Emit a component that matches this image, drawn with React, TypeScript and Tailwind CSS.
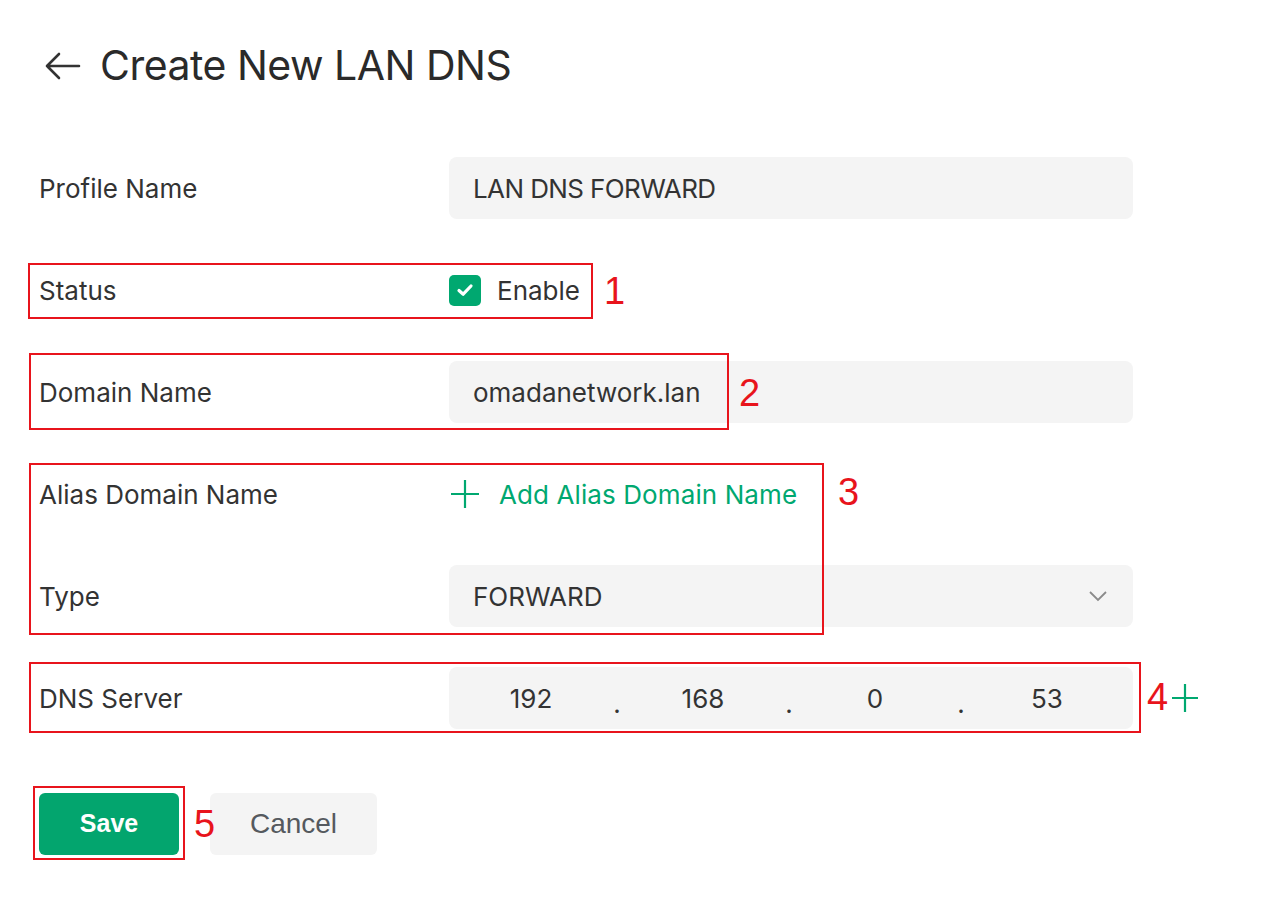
import React from "react";

const GREEN = "#00a870";

function Label({ children }: { children: React.ReactNode }) {
  return <div className="w-[410px] shrink-0 text-[26px] text-[#333333]">{children}</div>;
}

function Field({ children, className = "" }: { children: React.ReactNode; className?: string }) {
  return (
    <div className={`flex h-[62px] w-[684px] items-center rounded-[8px] bg-[#f4f4f4] px-6 text-[26px] text-[#333333] ${className}`}>
      {children}
    </div>
  );
}

function Row({ children }: { children: React.ReactNode }) {
  return <div className="flex h-[62px] items-center">{children}</div>;
}

function Mark({ className, n, numClass }: { className: string; n: string; numClass: string }) {
  return (
    <>
      <div className={`pointer-events-none absolute border-2 border-[#e8141c] ${className}`} />
      <div
        className={`pointer-events-none absolute text-[38px] leading-none text-[#e8141c] ${numClass}`}
        style={{ fontFamily: '"Liberation Sans", Arial, sans-serif' }}
      >
        {n}
      </div>
    </>
  );
}

export default function App() {
  return (
    <div
      className="relative h-[900px] w-[1278px] bg-white"
      style={{ fontFamily: 'Inter, "Noto Sans", sans-serif' }}
    >
      <div className="pl-[39px] pt-[40px]">
        {/* header */}
        <div className="flex h-[52px] items-center">
          <svg width="40" height="32" viewBox="0 0 40 32" className="ml-[4px] mr-[17px]">
            <path d="M4 16 H36 M16 4 L4 16 L16 28" fill="none" stroke="#333" strokeWidth="2.6" strokeLinecap="round" strokeLinejoin="round" />
          </svg>
          <h1 className="text-[41px] font-normal tracking-[-0.5px] text-[#2a2a2a]">Create New LAN DNS</h1>
        </div>

        <div className="mt-[65px] flex flex-col gap-[40px]">
          <Row>
            <Label>Profile Name</Label>
            <Field>
              <span className="tracking-[-0.6px]">LAN DNS FORWARD</span>
            </Field>
          </Row>

          <Row>
            <Label>Status</Label>
            <div className="flex items-center gap-[16px]">
              <div className="flex h-[31px] w-[32px] items-center justify-center rounded-[5px]" style={{ backgroundColor: GREEN }}>
                <svg width="20" height="20" viewBox="0 0 20 20">
                  <path d="M4 10.5 L8.2 14.2 L16 6" fill="none" stroke="white" strokeWidth="3.2" strokeLinecap="round" strokeLinejoin="round" />
                </svg>
              </div>
              <span className="text-[26px] text-[#333333]">Enable</span>
            </div>
          </Row>

          <Row>
            <Label>Domain Name</Label>
            <Field>omadanetwork.lan</Field>
          </Row>

          <Row>
            <Label>Alias Domain Name</Label>
            <div className="flex items-center gap-[18px] text-[26px]" style={{ color: GREEN }}>
              <svg width="32" height="32" viewBox="0 0 32 32">
                <path d="M16 2 V30 M2 16 H30" stroke={GREEN} strokeWidth="2.2" />
              </svg>
              <span className="tracking-[0.1px]">Add Alias Domain Name</span>
            </div>
          </Row>

          <Row>
            <Label>Type</Label>
            <Field className="justify-between">
              <span>FORWARD</span>
              <svg width="24" height="24" viewBox="0 0 24 24" className="mr-[-1px]">
                <path d="M4 8 L12 16 L20 8" fill="none" stroke="#8a8a8a" strokeWidth="1.8" />
              </svg>
            </Field>
          </Row>

          <Row>
            <Label>DNS Server</Label>
            <div className="flex h-[62px] w-[684px] items-center rounded-[8px] bg-[#f4f4f4] text-[26px] text-[#333333]">
              {["192", "168", "0", "53"].map((v, i) => (
                <React.Fragment key={v}>
                  <span className="flex w-[164px] justify-center">{v}</span>
                  {i < 3 && <span className="w-[8px] pt-[10px] text-center">.</span>}
                </React.Fragment>
              ))}
            </div>
            <svg width="30" height="30" viewBox="0 0 30 30" className="ml-[37px]">
              <path d="M15 1 V29 M2 15 H28" stroke={GREEN} strokeWidth="2.2" />
            </svg>
          </Row>
        </div>

        {/* actions */}
        <div className="mt-[64px] flex gap-[31px]">
          <button
            className="h-[62px] w-[140px] rounded-[6px] text-[25px] font-bold text-white"
            style={{ backgroundColor: "#03a56e", fontFamily: '"Liberation Sans", Arial, sans-serif' }}
          >
            Save
          </button>
          <button
            className="h-[62px] w-[167px] rounded-[6px] bg-[#f4f4f4] text-[28px] text-[#55595e]"
            style={{ fontFamily: '"Liberation Sans", Arial, sans-serif' }}
          >
            Cancel
          </button>
        </div>
      </div>

      {/* annotation marks */}
      <Mark className="left-[28px] top-[263px] h-[56px] w-[565px]" n="1" numClass="left-[604px] top-[272px]" />
      <Mark className="left-[29px] top-[353px] h-[77px] w-[700px]" n="2" numClass="left-[739px] top-[374px]" />
      <Mark className="left-[29px] top-[463px] h-[172px] w-[795px]" n="3" numClass="left-[838px] top-[473px]" />
      <Mark className="left-[29px] top-[662px] h-[71px] w-[1112px]" n="4" numClass="left-[1147px] top-[678px]" />
      <Mark className="left-[33px] top-[786px] h-[74px] w-[152px]" n="5" numClass="left-[194px] top-[805px]" />
    </div>
  );
}
